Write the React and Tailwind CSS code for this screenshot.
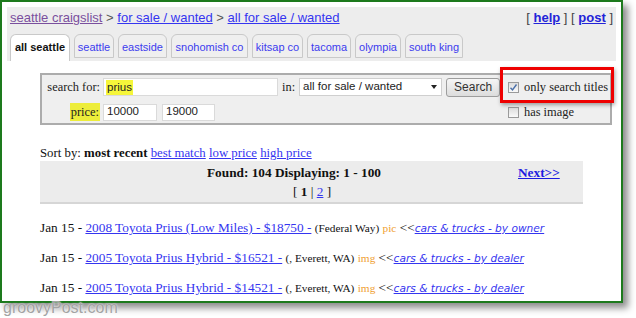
import React from "react";

const TABS = [
  { label: "all seattle", w: "w-[60px]", active: true },
  { label: "seattle", w: "w-[40px]" },
  { label: "eastside", w: "w-[49px]" },
  { label: "snohomish co", w: "w-[77px]" },
  { label: "kitsap co", w: "w-[51px]" },
  { label: "tacoma", w: "w-[44px]" },
  { label: "olympia", w: "w-[46px]" },
  { label: "south king", w: "w-[58px]" },
];

const POSTS = [
  {
    title: "2008 Toyota Prius (Low Miles) - $18750 -",
    where: "(Federal Way)",
    tag: "pic",
    cat: "cars & trucks - by owner",
  },
  {
    title: "2005 Toyota Prius Hybrid - $16521 -",
    where: "(, Everett, WA)",
    tag: "img",
    cat: "cars & trucks - by dealer",
  },
  {
    title: "2005 Toyota Prius Hybrid - $14521 -",
    where: "(, Everett, WA)",
    tag: "img",
    cat: "cars & trucks - by dealer",
  },
];

const serif = "font-['Liberation_Serif','Times_New_Roman',serif]";
const sans = "font-['Liberation_Sans',Arial,sans-serif]";

function Checkbox({ checked }) {
  return (
    <span className="w-[11px] h-[11px] border border-[#9a9a9a] bg-gradient-to-b from-[#dcdcdc] to-[#fafafa] flex items-center justify-center shrink-0">
      {checked && (
        <svg width="9" height="9" viewBox="0 0 9 9">
          <path d="M1.5 4.8 L3.5 7 L7.5 1.5" fill="none" stroke="#4a6fa8" strokeWidth="1.4" />
        </svg>
      )}
    </span>
  );
}

export default function App() {
  return (
    <div className="w-[636px] h-[318px] bg-white relative overflow-hidden">
      {/* screenshot frame */}
      <div className="w-[623px] h-[303px] border-2 border-[#1d7a1d] bg-white shadow-[5px_5px_7px_rgba(0,0,0,0.45)] overflow-hidden p-[5px]">
        {/* header */}
        <div className={`bg-[#ededed] ${sans}`}>
          <div className="h-[22px] flex items-center justify-between px-[3px] text-[13px]">
            <div className="text-[#555]">
              <a className="underline text-[#7a4f9e]">seattle craigslist</a> &gt;{" "}
              <a className="underline text-[#3535f0]">for sale / wanted</a> &gt;{" "}
              <a className="underline text-[#3535f0]">all for sale / wanted</a>
            </div>
            <div className="text-[#444]">
              [ <a className="underline font-bold text-[#2323d8]">help</a> ] [{" "}
              <a className="underline font-bold text-[#2323d8]">post</a> ]
            </div>
          </div>
          <div className="mt-[5px] h-[27px] flex items-start gap-[4px] pl-[3px]">
            {TABS.map((t) => (
              <div
                key={t.label}
                className={`${t.w} text-center text-[11px] border-[1.5px] border-b-0 border-[#c9c9c9] rounded-t-[6px] ${
                  t.active
                    ? "h-[27px] bg-white font-bold text-[#111] pt-[4px]"
                    : "h-[24px] bg-[#efefef] text-[#3c3cee] pt-[4px] border-b-[1.5px]"
                }`}
              >
                {t.label}
              </div>
            ))}
          </div>
        </div>

        {/* search form */}
        <div className="relative ml-[33px] mt-[12px] w-[572px]">
          <div className={`border-2 border-[#acacac] bg-[#efefef] h-[52px] pt-[3px] ${serif} text-[12.4px] text-[#222]`}>
            <div className="flex h-[18px] items-center">
              <div className="flex-1 flex items-center">
                <span className="w-[58px] text-right">search for:</span>
                <div className={`ml-[3px] w-[175px] h-[18px] bg-white border border-[#dadada] flex items-center pl-[2px] ${sans} text-[11.5px]`}>
                  <span className="bg-[#f6f63a] px-[1px] leading-[15px]">prius</span>
                </div>
                <span className="ml-[4px]">in:</span>
                <div className={`ml-[4px] w-[143px] h-[18px] bg-white border border-[#cfcfcf] flex items-center justify-between pl-[3px] pr-[4px] ${sans} text-[11.5px]`}>
                  <span>all for sale / wanted</span>
                  <span className="w-0 h-0 border-l-[3px] border-r-[3px] border-t-[4px] border-l-transparent border-r-transparent border-t-[#222]" />
                </div>
                <div className={`ml-[4px] w-[54px] h-[19px] rounded-[3px] border border-[#9d9d9d] bg-gradient-to-b from-[#f6f6f6] to-[#dcdcdc] flex items-center justify-center ${sans} text-[12px] text-[#333]`}>
                  Search
                </div>
              </div>
              <div className="w-[102px] flex items-center gap-[5px]">
                <Checkbox checked />
                <span>only search titles</span>
              </div>
            </div>
            <div className="flex h-[18px] items-center mt-[7px]">
              <div className="flex-1 flex items-center">
                <span className="w-[58px] flex justify-end">
                  <span className="bg-[#eded3a] px-[1px]">price:</span>
                </span>
                <div className={`ml-[3px] w-[54px] h-[17px] bg-white border border-[#dadada] flex items-center pl-[3px] ${sans} text-[11.5px]`}>
                  10000
                </div>
                <div className={`ml-[5px] w-[53px] h-[17px] bg-white border border-[#dadada] flex items-center pl-[3px] ${sans} text-[11.5px]`}>
                  19000
                </div>
              </div>
              <div className="w-[102px] flex items-center gap-[5px]">
                <Checkbox />
                <span>has image</span>
              </div>
            </div>
          </div>
          {/* red annotation box */}
          <div className="absolute left-[460px] top-[-6px] w-[114px] h-[36px] border-[3px] border-[#ee0000] shadow-[1px_2px_4px_rgba(0,0,0,0.35)]" />
        </div>

        {/* sort by */}
        <div className={`ml-[33px] mt-[20px] ${serif} text-[12.8px] leading-[16px] text-[#111]`}>
          Sort by: <b>most recent</b> <a className="underline text-[#3535f0]">best match</a>{" "}
          <a className="underline text-[#3535f0]">low price</a>{" "}
          <a className="underline text-[#3535f0]">high price</a>
        </div>

        {/* found bar */}
        <div className={`ml-[33px] w-[543px] h-[43px] bg-[#ececec] border-b-2 border-[#d6d6d6] relative pt-[4px] ${serif} text-[13.3px] leading-[16px] text-[#111]`}>
          <div className="pl-[167px] font-bold">Found: 104 Displaying: 1 - 100</div>
          <div className="pl-[253px] mt-[3px]">
            [ <b>1</b> | <a className="underline text-[#3535f0]">2</a> ]
          </div>
          <a className="absolute left-[478px] top-[4px] font-bold underline text-[#1c1ce0]">Next&gt;&gt;</a>
        </div>

        {/* listings */}
        <div className={`ml-[33px] mt-[9px] ${serif} text-[13.3px] text-[#111]`}>
          {POSTS.map((p, i) => (
            <div key={i} className="leading-[30px] whitespace-nowrap">
              Jan 15 - <a className="underline text-[#3535f0]">{p.title}</a>{" "}
              <span className="text-[11.3px]">{p.where}</span>{" "}
              <span className="text-[11.3px] text-[#f0a030]">{p.tag}</span> &lt;&lt;
              <a className="underline italic text-[#3535f0] font-['DejaVu_Sans',Verdana,sans-serif] text-[10.6px]">
                {p.cat}
              </a>
            </div>
          ))}
        </div>
      </div>

      {/* watermark */}
      <div className={`absolute left-[3px] top-[298px] ${sans} text-[16px] leading-[20px] text-[#a3a3a3] [text-shadow:0_0_2px_#fff]`}>
        groovyPost.com
      </div>
    </div>
  );
}
